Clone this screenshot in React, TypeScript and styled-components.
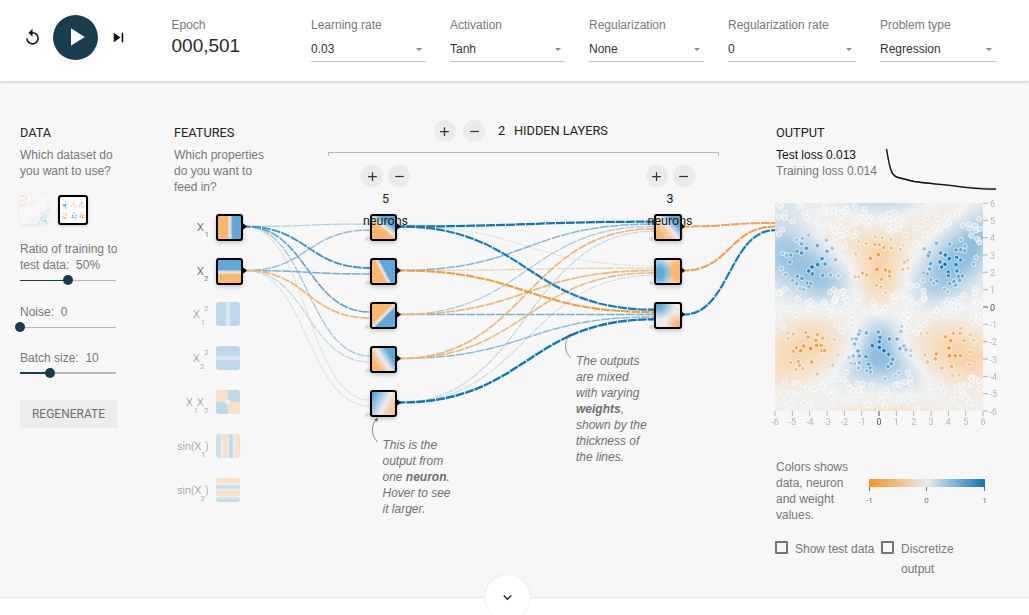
import React, { useEffect, useRef } from "react";
import styled, { createGlobalStyle } from "styled-components";
import { MdReplay, MdPlayArrow, MdSkipNext, MdAdd, MdRemove, MdExpandMore } from "react-icons/md";

const ORANGE = [245, 147, 34];
const NEUTRAL = [232, 234, 235];
const BLUE = [8, 119, 189];

const mix = (a: number[], b: number[], t: number) => a.map((v, i) => Math.round(v + (b[i] - v) * t));
const rgb = (c: number[]) => `rgb(${c.join(",")})`;
const weightColor = (w: number) => rgb(mix(NEUTRAL, w < 0 ? ORANGE : BLUE, Math.min(1, Math.abs(w))));

function seeded(seed: number) {
  let a = seed;
  return () => {
    a = (a + 0x6d2b79f5) | 0;
    let t = Math.imul(a ^ (a >>> 15), 1 | a);
    t = (t + Math.imul(t ^ (t >>> 7), 61 | t)) ^ t;
    return ((t ^ (t >>> 14)) >>> 0) / 4294967296;
  };
}

/* ---------- styles ---------- */

const sans = `"Liberation Sans", Arial, sans-serif`;
const roboto = `Roboto, "Liberation Sans", sans-serif`;

const GlobalStyle = createGlobalStyle`
  * { box-sizing: border-box; }
  body { margin: 0; background: #fff; overflow: hidden; font-family: ${sans}; font-size: 12px; color: #777; }
  button { border: 0; padding: 0; font: inherit; }
`;

const Page = styled.div`
  width: 1029px;
  height: 615px;
  overflow: hidden;
`;

const Header = styled.header`
  position: relative;
  z-index: 2;
  display: flex;
  height: 81px;
  background: #fff;
  box-shadow: 0 1px 3px rgba(0, 0, 0, 0.2);
`;

const Controls = styled.div`
  display: flex;
  align-items: center;
  width: 171px;
  height: 74px;
  padding-left: 23px;
  color: #111;
`;

const IconButton = styled.button<{ $left?: number }>`
  display: flex;
  margin-left: ${(p) => p.$left ?? 0}px;
  background: none;
  color: #111;
`;

const PlayButton = styled.button`
  display: flex;
  align-items: center;
  justify-content: center;
  width: 45px;
  height: 45px;
  margin-left: 11px;
  border-radius: 50%;
  background: #183d4e;
  color: #fff;
`;

const Epoch = styled.div`
  width: 140px;
  padding: 17px 0 0 0.5px;
`;

const EpochValue = styled.div`
  font: 400 19px/24px ${sans};
  color: #2a2a2a;
  margin-top: 1px;
`;

const Label = styled.div`
  line-height: 16px;
`;

const Selects = styled.div`
  display: flex;
  gap: 24px;
  padding-top: 17px;
`;

const Select = styled.div<{ $width: number }>`
  width: ${(p) => p.$width}px;
`;

const SelectValue = styled.div`
  display: flex;
  align-items: center;
  justify-content: space-between;
  height: 29px;
  padding: 4px 4px 0 0;
  border-bottom: 1px solid #c4c4c4;
  color: #333;
`;

const Caret = styled.span`
  border: 3.5px solid transparent;
  border-top-color: #8a8a8a;
  border-bottom: 0;
`;

const Main = styled.main`
  display: flex;
  height: 517px;
  padding-left: 20px;
  background: #f7f7f7;
  border-bottom: 1px solid #e6e6e6;
`;

const Title = styled.h2`
  margin: 0;
  font: 400 12.75px/20px ${roboto};
  color: #222;
`;

const Description = styled.p`
  margin: 4px 0 0;
  line-height: 16px;
`;

const DataColumn = styled.section`
  width: 97px;
  margin-right: 57px;
  padding-top: 42px;
`;

const Thumbs = styled.div`
  display: flex;
  gap: 9px;
  margin-top: 16px;
  height: 30px;
`;

const Thumb = styled.div<{ $active?: boolean }>`
  display: flex;
  width: ${(p) => (p.$active ? 30 : 29)}px;
  height: ${(p) => (p.$active ? 30 : 29)}px;
  overflow: hidden;
  background: #fff;
  border: ${(p) => (p.$active ? "2px solid #000" : "0")};
  border-radius: 3px;
  opacity: ${(p) => (p.$active ? 1 : 0.3)};
  box-shadow: 0 1px 3px rgba(0, 0, 0, 0.2);
`;

const SliderGroup = styled.div<{ $top: number }>`
  margin-top: ${(p) => p.$top}px;
`;

const SliderLabel = styled.div`
  line-height: 16px;
  white-space: pre;
`;

const Slider = styled.div`
  display: flex;
  align-items: center;
  height: 10px;
  width: 96px;
  margin-top: 2px;
`;

const Fill = styled.div<{ $width: number; $thick?: boolean }>`
  width: ${(p) => p.$width}px;
  height: ${(p) => (p.$thick ? 2 : 1)}px;
  background: #183d4e;
`;

const Rest = styled.div<{ $thick?: boolean }>`
  flex: 1;
  height: ${(p) => (p.$thick ? 2 : 1)}px;
  background: #b9bcbd;
`;

const Knob = styled.div`
  width: 10px;
  height: 10px;
  margin: 0 -5px;
  z-index: 1;
  border-radius: 50%;
  background: #183d4e;
`;

const Regenerate = styled.button`
  width: 97px;
  height: 28px;
  margin-top: 22px;
  background: #ececec;
  font: 400 12px/28px ${roboto};
  color: #707070;
`;

const Network = styled.section`
  position: relative;
  display: flex;
  width: 601px;
  padding-top: 42px;
`;

const FeaturesHead = styled.div`
  width: 154px;
  padding-right: 50px;
`;

const HiddenHead = styled.div`
  width: 391px;
  margin-top: -3px;
`;

const HiddenTitle = styled.div`
  display: flex;
  align-items: center;
  padding-left: 105.5px;
`;

const Round = styled.button<{ $gap?: number }>`
  display: flex;
  align-items: center;
  justify-content: center;
  width: 22px;
  height: 22px;
  margin-right: ${(p) => p.$gap ?? 0}px;
  border-radius: 50%;
  background: #ebebeb;
  color: #333;
`;

const LayerCount = styled(Title)`
  width: 16px;
`;

const Bracket = styled.div`
  height: 4px;
  margin-top: 10px;
  border: 1px solid #bbb;
  border-bottom: 0;
`;

const LayerControls = styled.div`
  position: relative;
  z-index: 1;
  display: flex;
  justify-content: space-between;
  width: 366.5px;
  padding-left: 33px;
  margin-top: 9px;
`;

const LayerControl = styled.div`
  width: 49px;
  text-align: center;
  font: 400 12.5px/22px ${roboto};
  color: #222;
`;

const LayerButtons = styled.div`
  display: flex;
  justify-content: space-between;
  margin-bottom: 1px;
`;

const Diagram = styled.div`
  position: absolute;
  inset: 0;
`;

const Links = styled.svg`
  display: block;
`;

const FeatureText = styled.text<{ $active?: boolean }>`
  font: 300 11px ${roboto};
  fill: ${(p) => (p.$active ? "#333" : "#888")};
  tspan.small { font-size: 8px; }
`;

const Node = styled.div<{ $x: number; $y: number; $fill: string; $w?: number }>`
  position: absolute;
  left: ${(p) => p.$x}px;
  top: ${(p) => p.$y}px;
  width: ${(p) => p.$w ?? 27}px;
  height: 27px;
  border: 2px solid #000;
  border-radius: 3px;
  background: ${(p) => p.$fill};
  background-origin: border-box;
  box-shadow: 0 2px 4px rgba(0, 0, 0, 0.2);
`;

const InactiveNode = styled.div<{ $x: number; $y: number; $fill: string }>`
  position: absolute;
  left: ${(p) => p.$x}px;
  top: ${(p) => p.$y}px;
  width: 24px;
  height: 24px;
  border-radius: 3px;
  background: ${(p) => p.$fill};
`;

const Callout = styled.div<{ $x: number; $y: number; $width: number }>`
  position: absolute;
  left: ${(p) => p.$x}px;
  top: ${(p) => p.$y}px;
  width: ${(p) => p.$width}px;
  line-height: 16px;
  font-style: italic;
  color: #707070;
`;

const Output = styled.section`
  width: 234px;
  padding-top: 42px;
`;

const OutputTitle = styled(Title)`
  padding-left: 1px;
`;

const LossRow = styled.div`
  display: flex;
  height: 56px;
  margin-top: 4px;
`;

const LossText = styled.div`
  width: 110px;
  padding-left: 1px;
  line-height: 16px;
  white-space: nowrap;
`;

const TestLoss = styled.div`
  color: #111;
`;

const Plot = styled.div`
  position: relative;
  width: 225px;
  height: 225px;
`;

const Heat = styled.canvas`
  display: block;
  width: 208px;
  height: 208px;
`;

const PlotOverlay = styled.svg`
  position: absolute;
  inset: 0;
  font: 9px ${roboto};
`;

const LegendRow = styled.div`
  display: flex;
  margin-top: 31px;
  padding-left: 1px;
`;

const LegendText = styled.div`
  width: 80px;
  margin-right: 5px;
  line-height: 16px;
`;

const LegendScale = styled.svg`
  font: 8px ${roboto};
  margin-top: 20px;
`;

const Checks = styled.div`
  display: flex;
  margin-top: 15px;
  line-height: 20px;
`;

const Check = styled.label<{ $width: number }>`
  display: flex;
  width: ${(p) => p.$width}px;
  gap: 7px;
`;

const Box = styled.span`
  flex: none;
  width: 13px;
  height: 13px;
  margin-top: 3px;
  border: 2px solid #757575;
  border-radius: 1px;
`;

const CheckText = styled.span`
  padding-top: 0.5px;
`;

const Footer = styled.footer`
  position: relative;
  z-index: 1;
  display: flex;
  justify-content: center;
  padding-right: 14px;
`;

const MoreButton = styled.button`
  display: flex;
  align-items: center;
  justify-content: center;
  width: 45px;
  height: 45px;
  margin-top: -23px;
  border-radius: 50%;
  background: #fff;
  color: #222;
  box-shadow: 0 0 2px rgba(0, 0, 0, 0.15);
`;

/* ---------- data ---------- */

const selects = [
  { label: "Learning rate", value: "0.03", width: 115 },
  { label: "Activation", value: "Tanh", width: 115 },
  { label: "Regularization", value: "None", width: 115 },
  { label: "Regularization rate", value: "0", width: 128 },
  { label: "Problem type", value: "Regression", width: 116 },
];

const rowY = (i: number) => 227 + 44 * i;

type Link = { x1: number; y1: number; x2: number; y2: number; w: number };

const weightsIn = [
  [0.25, 0.75, 0.6, 0.3, -0.15],
  [0.38, 0.5, -0.6, 0.2, 0.08],
];
const weightsHidden = [
  [1, -0.1, 0.95],
  [0.45, -0.28, -0.9],
  [0.28, -0.6, 0.5],
  [-0.6, -0.55, 0.42],
  [0.18, 0.12, 1.1],
];
const weightsOut = [-0.8, -0.85, 0.95];

const links: Link[] = [
  ...weightsIn.flatMap((row, i) =>
    row.map((w, j) => ({ x1: 245, y1: rowY(i) - 0.5, x2: 370, y2: rowY(j) + (i - 0.5) * 6, w }))
  ),
  ...weightsHidden.flatMap((row, i) =>
    row.map((w, j) => ({ x1: 399, y1: rowY(i) - 0.5, x2: 654, y2: rowY(j) + (i - 2) * 2.4 - 0.5, w }))
  ),
  ...weightsOut.map((w, i) => ({ x1: 684, y1: rowY(i) - 0.5, x2: 775, y2: 226.5 + (i - 1) * 3.6, w })),
].sort((a, b) => Math.abs(a.w) - Math.abs(b.w));

const O = "#fdb76c";
const B = "#5ea8da";
const W = "#ecebea";

const activeFeatures = [
  `linear-gradient(90deg, ${O} 42%, ${W} 52%, ${B} 62%)`,
  `linear-gradient(180deg, ${B} 42%, ${W} 52%, ${O} 62%)`,
];

const hiddenOne = [
  `linear-gradient(38deg, ${O} 44%, ${W} 52%, ${B} 68%)`,
  `linear-gradient(62deg, ${O} 42%, ${W} 49%, ${B} 56%)`,
  `linear-gradient(135deg, ${O} 44%, ${W} 51%, ${B} 58%)`,
  `linear-gradient(57deg, ${O} 26%, ${W} 50%, ${B} 72%)`,
  `linear-gradient(117deg, ${B} 14%, ${W} 54%, ${O} 92%)`,
];

const hiddenTwo = [
  `linear-gradient(48deg, ${O} 22%, #f6d3ad 42%, ${W} 52%, ${B} 72%)`,
  `radial-gradient(ellipse 13px 17px at 20% 55%, ${B} 30%, transparent 100%), radial-gradient(ellipse 13px 18px at 84% 50%, ${O} 40%, transparent 100%), ${W}`,
  `radial-gradient(ellipse 18px 14px at 12% 12%, ${B} 20%, transparent 100%), radial-gradient(ellipse 13px 12px at 86% 82%, ${O} 15%, transparent 100%), ${W}`,
];

const paleB = "#bddaed";
const paleO = "#fbe0c3";
const inactiveFeatures = [
  `linear-gradient(90deg, ${paleB} 38%, #dde9f1 45%, #dde9f1 55%, ${paleB} 62%)`,
  `linear-gradient(180deg, ${paleB} 38%, #dde9f1 45%, #dde9f1 55%, ${paleB} 62%)`,
  `radial-gradient(circle at 50% 50%, #eef0f0 0 8%, transparent 22%), conic-gradient(${paleB} 0 24%, ${paleO} 26% 49%, ${paleB} 51% 74%, ${paleO} 76%)`,
  `linear-gradient(90deg, #c8dfec 16%, #eeeeec 24%, ${paleO} 32%, ${paleO} 42%, #e8ebec 50%, #bddaed 58%, #bddaed 66%, #eeeeec 76%, ${paleO} 86%)`,
  `linear-gradient(180deg, ${paleO} 16%, #eeeeec 26%, #bddaed 36%, #c8dfec 42%, #eeeeec 50%, ${paleO} 56%, ${paleO} 68%, #eeeeec 78%, #c3dcec 90%)`,
];

const centers = [
  [-4, 2.5, 1], [0, 2.5, -1], [4, 2.5, 1],
  [-4, -2.5, -1], [0, -2.5, 1], [4, -2.5, -1],
];

// Samples close to a cluster, in thirds of a pixel from the plot's top-left corner.
const clusterSamples = `65,110 82,106 101,97 80,123 94,136 127,128 154,112 156,145 66,145 80,150 35,157 47,156 23,151 45,177 141,167 128,185 111,192 101,204 150,183 181,170 112,213 67,220 81,226 143,217 166,216 190,218 172,136 32,215 19,196 52,232 97,240 107,242 102,252 76,257 86,260 65,242
251,116 273,121 301,102 322,104 300,125 313,126 326,134 349,135 348,109 376,139 242,153 286,166 310,155 306,199 331,201 344,206 344,219 319,229 263,210 275,216 251,222 240,222 305,247 318,252 332,269 388,177 383,199 400,196 398,172 386,126
448,138 484,121 524,123 463,149 460,158 497,150 511,156 523,167 543,141 557,140 569,143 570,129 558,110 545,163 557,171 543,185 495,177 510,184 500,192 467,182 520,207 546,204 551,220 562,219 520,218 457,213 446,209 468,230 477,240 486,234 524,242 537,236 554,232 542,247 509,259 518,266 596,183 604,164 464,198 445,232
40,390 55,393 92,389 99,402 127,395 123,412 143,406 40,407 177,409 125,427 139,427 141,442 149,443 107,437 86,429 64,434 54,445 77,443 47,479 70,476 74,487 63,500 83,497 110,477 127,513 189,455 173,487
255,384 251,394 274,390 310,387 315,403 313,416 292,428 313,433 327,443 341,454 343,408 366,408 231,408 244,408 239,423 249,444 253,459 273,461 235,459 222,464 238,482 253,479 228,481 281,484 285,495 250,495 276,503 286,507 339,490 349,482 353,469 375,437 387,429 393,440 378,385 408,442 330,527 371,509 361,518 407,458 380,370
456,390 439,393 512,401 535,391 556,391 527,413 567,413 585,395 597,412 522,435 523,458 541,458 556,458 484,453 481,468 450,456 458,477 501,495 530,490 533,517 551,516 584,485 585,447 558,377`
  .split(/\s+/)
  .map((s) => s.split(",").map((n) => Number(n) / 3));

const toUnit = (px: number, py: number) => [(px / 208) * 12 - 6, 6 - (py / 208) * 12];

function labelAt(px: number, py: number) {
  const [x, y] = toUnit(px, py);
  let best = 0;
  centers.forEach(([cx, cy, s]) => {
    const v = Math.max(0, 1 - Math.hypot(x - cx, y - cy) / 2.1);
    if (v > Math.abs(best)) best = v * s;
  });
  return best;
}

const outerSamples = (() => {
  const rand = seeded(41);
  const list: number[][] = [];
  while (list.length < 300) {
    const px = 2 + rand() * 204;
    const py = 2 + rand() * 204;
    if (Math.abs(labelAt(px, py)) < 0.04) list.push([px, py]);
  }
  return list;
})();

// Each blob: centre x, centre y, spread x, spread y, amplitude, horizontal drift per unit of height.
const blobs = [
  [-4.3, 2.3, 1.35, 1.25, 0.85, -0.45], [-5.8, 3.6, 1, 1.4, 0.35, 0], [-3, 1.3, 0.9, 0.7, 0.25, 0],
  [4.2, 2.5, 1.25, 1.35, 0.85, 0.45], [5.8, 4.2, 1, 1.4, 0.55, 0.5], [3.2, 1.2, 0.9, 0.7, 0.2, 0],
  [0, 1.9, 0.85, 1.2, -0.85, 0], [0, 3.4, 1.6, 0.7, -0.35, 0], [-2, 4.4, 1, 0.7, -0.3, -0.5], [2.2, 4.6, 1.2, 0.6, -0.25, 0.8],
  [3.8, 5.7, 1, 0.5, -0.15, 1],
  [0, 6.4, 1.6, 0.7, 0.5, 0], [-5, 6, 1.2, 0.8, 0.12, 0],
  [-4.3, -2.3, 1.5, 1.2, -0.8, 0.35], [-5.7, -3.6, 0.8, 1, -0.2, 0],
  [4.4, -2.6, 1.5, 1.2, -0.85, -0.35], [5.8, -3.4, 0.8, 1, -0.2, 0],
  [0, -2.1, 0.75, 1, 0.85, 0], [-0.9, -3.5, 1, 0.8, 0.45, 0.4], [1.1, -3.6, 1, 0.8, 0.45, -0.4],
  [0.2, -6.3, 2, 0.65, -0.45, 0], [5, -6, 1.4, 0.5, -0.08, 0],
];

function fieldAt(x: number, y: number) {
  return blobs.reduce((sum, [cx, cy, sx, sy, a, k]) => {
    const dy = y - cy;
    const dx = x - cx - k * dy;
    return sum + a * Math.exp(-(dx ** 2 / (2 * sx * sx) + dy ** 2 / (2 * sy * sy)));
  }, 0);
}

/* ---------- parts ---------- */

function Heatmap() {
  const ref = useRef<HTMLCanvasElement>(null);
  useEffect(() => {
    const ctx = ref.current!.getContext("2d")!;
    const image = ctx.createImageData(208, 208);
    for (let py = 0; py < 208; py++) {
      for (let px = 0; px < 208; px++) {
        const [x, y] = toUnit(px, py);
        const v = fieldAt(x, y);
        const t = Math.min(1, Math.abs(v));
        const c = mix([240, 241, 241], v < 0 ? [249, 208, 163] : [146, 191, 222], t);
        image.data.set([c[0], c[1], c[2], 255], (py * 208 + px) * 4);
      }
    }
    ctx.putImageData(image, 0, 0);
  }, []);
  return <Heat ref={ref} width={208} height={208} />;
}

function OutputPlot() {
  const ticks = Array.from({ length: 13 }, (_, i) => i - 6);
  return (
    <Plot>
      <Heatmap />
      <PlotOverlay width="225" height="225" overflow="visible">
        {outerSamples.map(([x, y], i) => (
          <circle key={i} cx={x} cy={y} r="2.6" fill="#e8eaeb" fillOpacity="0.5" stroke="#fff" strokeOpacity="0.75" />
        ))}
        {clusterSamples.map(([x, y], i) => (
          <circle key={i} cx={x} cy={y} r="2.3" fill={weightColor(labelAt(x, y) * 1.05 + Math.sign(labelAt(x, y)) * 0.08)} stroke="#fff" strokeOpacity="0.7" />
        ))}
        {ticks.map((t) => {
          const p = ((t + 6) / 12) * 208;
          const color = t === 0 ? "#555" : "#b5b5b5";
          return (
            <g key={t} fill={color} stroke="none">
              <rect x={p - 0.5} y="208" width="1" height="5" />
              <text x={p} y="221.5" textAnchor="middle">{t}</text>
              <rect x="208" y={208 - p - 0.5} width="5" height="1" />
              <text x={t < 0 ? 214.5 : 215} y={208 - p + 3.5}>{t}</text>
            </g>
          );
        })}
      </PlotOverlay>
    </Plot>
  );
}

function DatasetThumb({ gauss }: { gauss?: boolean }) {
  const rand = seeded(gauss ? 7 : 19);
  const dots = Array.from({ length: gauss ? 190 : 260 }, () => {
    const x = rand() * 28;
    const y = rand() * 28;
    const v = gauss ? labelAt((x / 26) * 208, (y / 26) * 208) : (x + y) / 28 - 1;
    return { x, y, v };
  });
  return (
    <svg width="30" height="30">
      {dots.map((d, i) => (
        <rect key={i} x={d.x} y={d.y} width="1.2" height="1.2" fill={weightColor(d.v)} opacity={Math.min(1, Math.abs(d.v) * 1.8)} />
      ))}
    </svg>
  );
}

function NetworkDiagram() {
  return (
    <Diagram>
      <Links width="601" height="515" viewBox="174 81 601 515">
        {links.map((l, i) => {
          const mid = (l.x1 + l.x2) / 2;
          return (
            <path
              key={i}
              d={`M${l.x1},${l.y1}C${mid},${l.y1} ${mid},${l.y2} ${l.x2},${l.y2}`}
              fill="none"
              stroke={weightColor(l.w)}
              strokeWidth={0.9 + Math.abs(l.w) * 1.35}
              strokeDasharray="9 1"
              strokeDashoffset="-7"
            />
          );
        })}
        {[0, 1].map((i) => (
          <path key={i} d={`M242,${rowY(i) - 4.5}l5,4l-5,4z`} />
        ))}
        {[0, 1, 2, 3, 4].map((i) => (
          <g key={i}>
            <path d={`M396,${rowY(i) - 4.5}l5,4l-5,4z`} />
            <rect x="365" y={rowY(i) + 10} width="5" height="4" rx="1" fill="#e3e4e4" />
          </g>
        ))}
        {[0, 1, 2].map((i) => (
          <g key={i}>
            <path d={`M681,${rowY(i) - 4}l4,3.5l-4,3.5z`} />
            <rect x="649" y={rowY(i) + 10} width="4" height="4" rx="1" fill="#dcdfe2" />
          </g>
        ))}

        <FeatureText $active x="197" y="230.5">X<tspan className="small" x="204.5" y="237">1</tspan></FeatureText>
        <FeatureText $active x="197" y="274.5">X<tspan className="small" x="204" y="281">2</tspan></FeatureText>
        <FeatureText x="193" y="318">X<tspan className="small" x="200.5" y="325">1</tspan><tspan className="small" x="204" y="311">2</tspan></FeatureText>
        <FeatureText x="193" y="362">X<tspan className="small" x="200" y="369">2</tspan><tspan className="small" x="204" y="355">2</tspan></FeatureText>
        <FeatureText x="186" y="406">X<tspan className="small" x="193.5" y="413">1</tspan><tspan x="197" y="406">X</tspan><tspan className="small" x="204" y="413">2</tspan></FeatureText>
        <FeatureText x="177" y="450">sin(X<tspan className="small" x="201" y="457">1</tspan><tspan x="205" y="450">)</tspan></FeatureText>
        <FeatureText x="177" y="494">sin(X<tspan className="small" x="200.5" y="501">2</tspan><tspan x="205" y="494">)</tspan></FeatureText>

        <path d="M377.5,442C371,435 371,427 376,419" fill="none" stroke="#888" />
        <path d="M378,417.5l-3.8,2.2l3,2z" fill="#666" />
        <path d="M571,358C564,351 564,343 569,336" fill="none" stroke="#999" />
        <path d="M571,333.5l-3.8,2.2l3,2z" fill="#555" />
      </Links>
      {activeFeatures.map((fill, i) => (
        <Node key={i} $x={42} $y={rowY(i) - 94} $fill={fill} />
      ))}
      {inactiveFeatures.map((fill, i) => (
        <InactiveNode key={i} $x={42} $y={rowY(i + 2) - 94} $fill={fill} />
      ))}
      {hiddenOne.map((fill, i) => (
        <Node key={i} $x={196} $y={rowY(i) - 94} $fill={fill} />
      ))}
      {hiddenTwo.map((fill, i) => (
        <Node key={i} $x={480} $y={rowY(i) - 94} $fill={fill} $w={28} />
      ))}
      <Callout $x={208.5} $y={356} $width={74}>
        This is the<br />output from<br />one <b>neuron</b>.<br />Hover to see<br />it larger.
      </Callout>
      <Callout $x={402} $y={272} $width={80}>
        The outputs<br />are mixed<br />with varying<br /><b>weights</b>,<br />shown by the<br />thickness of<br />the lines.
      </Callout>
    </Diagram>
  );
}

export default function App() {
  return (
    <Page>
      <GlobalStyle />
      <Header>
        <Controls>
          <IconButton aria-label="Reset"><MdReplay size={19} /></IconButton>
          <PlayButton aria-label="Run"><MdPlayArrow size={30} /></PlayButton>
          <IconButton aria-label="Step" $left={10.5}><MdSkipNext size={19} /></IconButton>
        </Controls>
        <Epoch>
          <Label>Epoch</Label>
          <EpochValue>000,501</EpochValue>
        </Epoch>
        <Selects>
          {selects.map((s) => (
            <Select key={s.label} $width={s.width}>
              <Label>{s.label}</Label>
              <SelectValue>{s.value}<Caret /></SelectValue>
            </Select>
          ))}
        </Selects>
      </Header>

      <Main>
        <DataColumn>
          <Title>DATA</Title>
          <Description>Which dataset do you want to use?</Description>
          <Thumbs>
            <Thumb><DatasetThumb /></Thumb>
            <Thumb $active><DatasetThumb gauss /></Thumb>
          </Thumbs>
          <SliderGroup $top={16}>
            <SliderLabel>Ratio of training to<br />test data:{"  "}50%</SliderLabel>
            <Slider><Fill $width={48} /><Knob /><Rest /></Slider>
          </SliderGroup>
          <SliderGroup $top={19}>
            <SliderLabel>Noise:{"  "}0</SliderLabel>
            <Slider><Knob /><Rest /></Slider>
          </SliderGroup>
          <SliderGroup $top={18}>
            <SliderLabel>Batch size:{"  "}10</SliderLabel>
            <Slider><Fill $width={30} $thick /><Knob /><Rest $thick /></Slider>
          </SliderGroup>
          <Regenerate>REGENERATE</Regenerate>
        </DataColumn>

        <Network>
          <NetworkDiagram />
          <FeaturesHead>
            <Title>FEATURES</Title>
            <Description>Which properties do you want to feed in?</Description>
          </FeaturesHead>
          <HiddenHead>
            <HiddenTitle>
              <Round $gap={7.5}><MdAdd size={15} /></Round>
              <Round $gap={13}><MdRemove size={15} /></Round>
              <LayerCount>2</LayerCount>
              <Title>HIDDEN LAYERS</Title>
            </HiddenTitle>
            <Bracket />
            <LayerControls>
              {[5, 3].map((count) => (
                <LayerControl key={count}>
                  <LayerButtons>
                    <Round><MdAdd size={15} /></Round>
                    <Round><MdRemove size={15} /></Round>
                  </LayerButtons>
                  <div>{count}</div>
                  <div>neurons</div>
                </LayerControl>
              ))}
            </LayerControls>
          </HiddenHead>
        </Network>

        <Output>
          <OutputTitle>OUTPUT</OutputTitle>
          <LossRow>
            <LossText>
              <TestLoss>Test loss 0.013</TestLoss>
              <div>Training loss 0.014</div>
            </LossText>
            <svg width="112" height="46" viewBox="885 147 112 46">
              <path d="M886.5,149C888,158 889,164 890.5,168.5C892,174.5 894,176.5 898,177.5L914,181.5C930,183.6 942,184 965,187C975,188.2 985,188.5 996,188.7" fill="none" stroke="#aaa" strokeWidth="1.5" />
              <path d="M886.5,149C888,158 889,164 890.5,168.5C892,174.5 894,176.5 898,177.5L914,181.5C930,184 942,184 965,187.3C975,188.5 985,189 996,189.2" fill="none" stroke="#111" strokeWidth="1.3" />
            </svg>
          </LossRow>
          <OutputPlot />
          <LegendRow>
            <LegendText>Colors shows data, neuron and weight values.</LegendText>
            <LegendScale width="130" height="30" viewBox="861 479 130 30">
              <defs>
                <linearGradient id="scale">
                  <stop offset="0" stopColor={rgb(ORANGE)} />
                  <stop offset="0.5" stopColor={rgb(NEUTRAL)} />
                  <stop offset="1" stopColor={rgb(BLUE)} />
                </linearGradient>
              </defs>
              <rect x="869" y="479" width="116" height="8" fill="url(#scale)" />
              {[[869, "-1"], [926, "0"], [984, "1"]].map(([x, t]) => (
                <g key={t} fill="#777">
                  <rect x={x} y="487" width="1" height="4" />
                  <text x={Number(x) + 0.5} y="503" textAnchor="middle">{t}</text>
                </g>
              ))}
            </LegendScale>
          </LegendRow>
          <Checks>
            <Check $width={106}><Box /><CheckText>Show test data</CheckText></Check>
            <Check $width={90}><Box /><CheckText>Discretize output</CheckText></Check>
          </Checks>
        </Output>
      </Main>

      <Footer>
        <MoreButton aria-label="More"><MdExpandMore size={17} /></MoreButton>
      </Footer>
    </Page>
  );
}
